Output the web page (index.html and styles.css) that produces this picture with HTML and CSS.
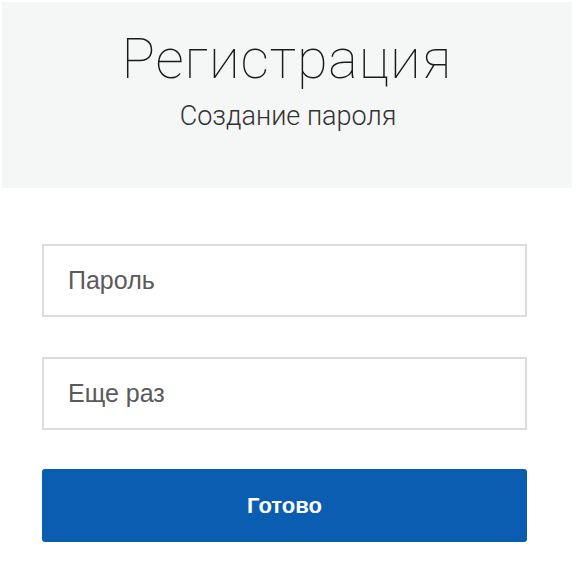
FILE: index.html
```html
<!DOCTYPE html>
<html>
<head>
    <title>Регистрация</title>
    <link rel="stylesheet" href="styles.css">
</head>
<body>
    <div class="header">
        <h1>Регистрация</h1>
        <p>Создание пароля</p>
    </div>
    <div class="form">
        <input type="password" class="field" placeholder="Пароль">
        <input type="password" class="field" placeholder="Еще раз">
        <button class="submit">Готово</button>
    </div>
</body>
</html>
```

FILE: styles.css
```css
body {
    margin: 0;
    padding: 2px 4px 0 2px;
    background-color: #fff;
    font-family: "Liberation Sans", Arial, sans-serif;
}

.header {
    background-color: #f5f6f6;
    height: 186px;
    display: flex;
    flex-direction: column;
    align-items: center;
    box-sizing: border-box;
}

h1 {
    font-family: Roboto, sans-serif;
    font-weight: 100;
    font-size: 56px;
    color: #1a1a1a;
    margin: 27px 0 0;
    line-height: 60px;
    letter-spacing: 0.8px;
}

.header p {
    font-family: Roboto, sans-serif;
    font-weight: 300;
    font-size: 27px;
    color: #333;
    margin: 11px 0 0;
    padding-left: 2px;
}

.form {
    display: flex;
    flex-direction: column;
    gap: 40px;
    width: 485px;
    margin: 56px 0 0 40px;
}

.field {
    height: 73px;
    border: 2px solid #dcdcdc;
    padding: 0 24px;
    font-family: "Liberation Sans", Arial, sans-serif;
    font-size: 25px;
    box-sizing: border-box;
    outline: none;
}

.field::placeholder {
    color: #5a5a5a;
}

.submit {
    height: 73px;
    margin-top: -1px;
    background-color: #0a5db0;
    color: #fff;
    border: none;
    border-radius: 3px;
    font-family: "Liberation Sans", Arial, sans-serif;
    font-weight: bold;
    font-size: 22px;
    cursor: pointer;
}
```
